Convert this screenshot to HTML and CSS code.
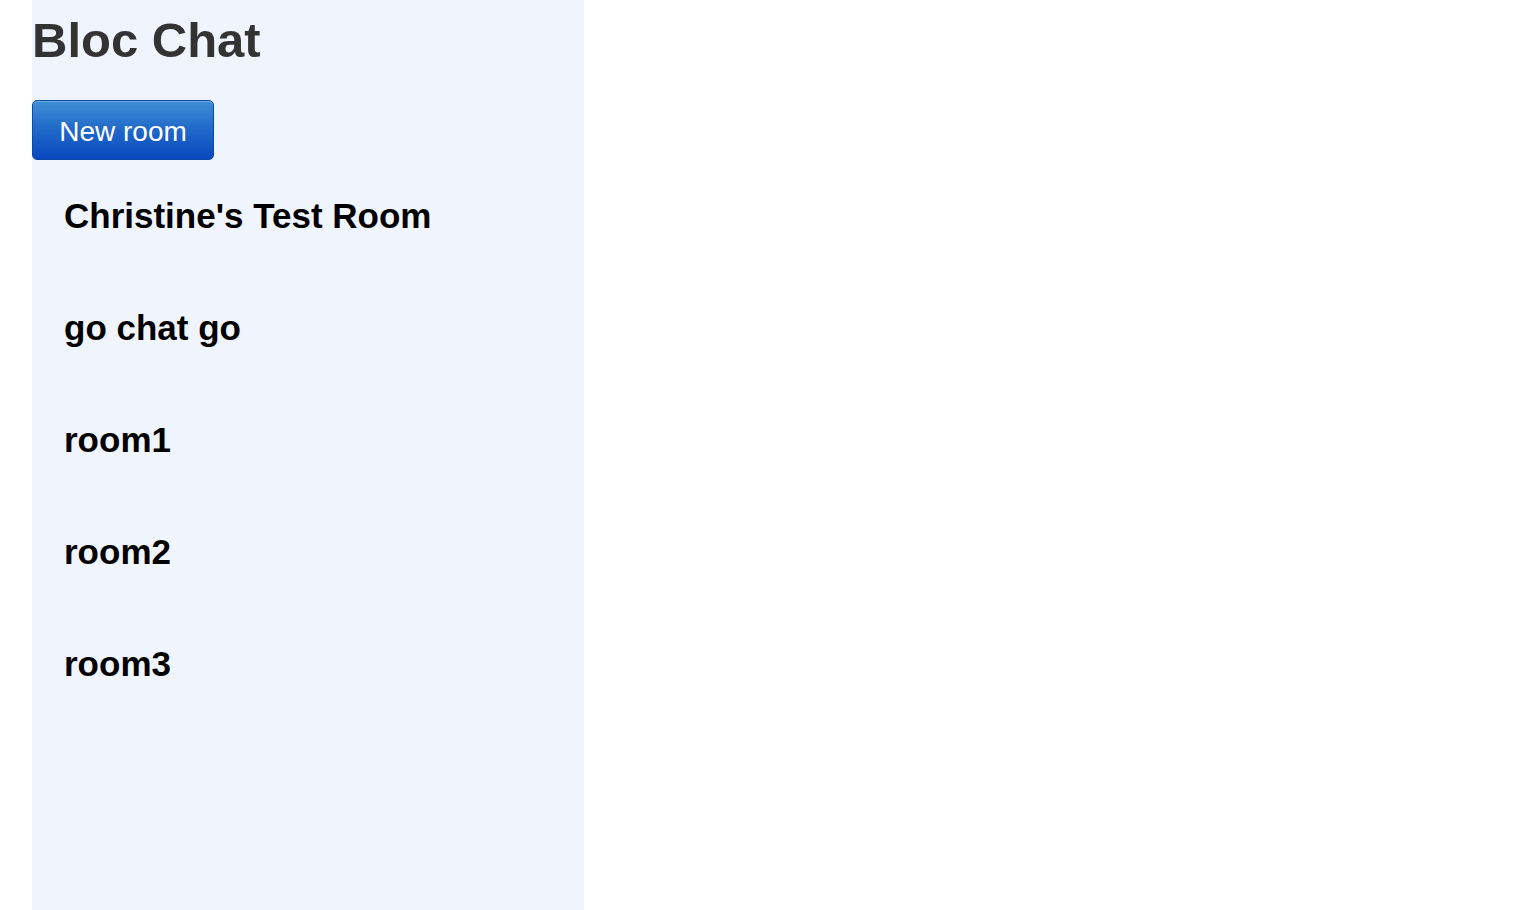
FILE: index.html
```html
<!DOCTYPE html>
<html>
<head>
<meta charset="utf-8">
<title>Bloc Chat</title>
<link rel="stylesheet" href="styles.css">
</head>
<body>
<div class="layout">
  <aside class="sidebar">
    <h1 class="title">Bloc Chat</h1>
    <button class="new-room">New room</button>
    <ul class="rooms">
      <li class="room">Christine's Test Room</li>
      <li class="room">go chat go</li>
      <li class="room">room1</li>
      <li class="room">room2</li>
      <li class="room">room3</li>
    </ul>
  </aside>
  <main class="main"></main>
</div>
</body>
</html>
```
FILE: styles.css
```css
html, body {
  margin: 0;
  padding: 0;
  background: #ffffff;
  font-family: "Liberation Sans", Arial, Helvetica, sans-serif;
}
.layout {
  display: flex;
  min-height: 910px;
  padding-left: 32px;
}
.sidebar {
  width: 552px;
  min-height: 910px;
  background: #f0f4fd;
  display: flex;
  flex-direction: column;
  align-items: flex-start;
}
.title {
  margin: 0;
  padding-top: 12px;
  font-size: 49px;
  line-height: 56px;
  font-weight: bold;
  color: #333333;
}
.new-room {
  margin-top: 32px;
  width: 182px;
  height: 60px;
  padding: 3px 0 0 0;
  font-family: "Liberation Sans", Arial, Helvetica, sans-serif;
  font-size: 28px;
  color: #ffffff;
  border: 1px solid #0d4aa8;
  border-radius: 5px;
  background: linear-gradient(to bottom, #3f8fd6 0%, #1f68c8 50%, #0a48bf 100%);
  box-shadow: inset 0 1px 0 rgba(255,255,255,0.25);
}
.rooms {
  list-style: none;
  margin: 0;
  padding: 0 0 0 32px;
}
.room {
  font-size: 35px;
  font-weight: bold;
  color: #000000;
  height: 112px;
  line-height: 40px;
  padding-top: 36px;
  box-sizing: border-box;
}
.main {
  flex: 1;
}
```
